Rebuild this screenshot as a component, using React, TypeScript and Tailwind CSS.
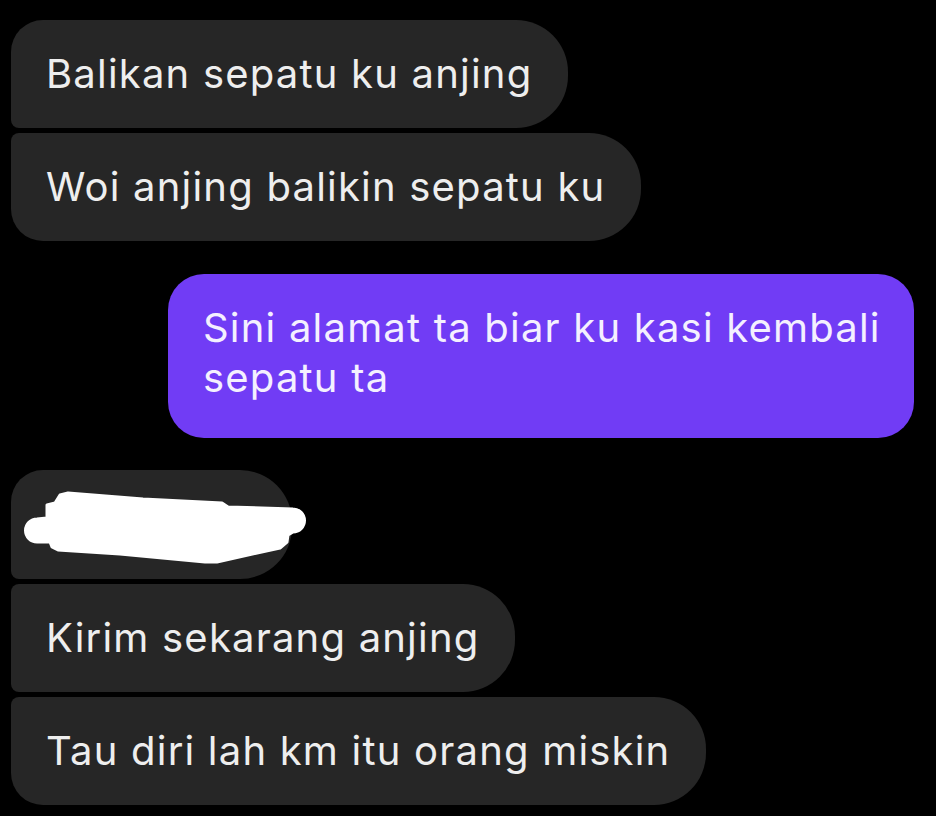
import React from "react";

type Side = "first" | "middle" | "last";

function Bubble({ text, pos }: { text: string; pos: Side }) {
  const corners =
    pos === "first"
      ? "rounded-tl-[32px] rounded-bl-[8px]"
      : pos === "last"
      ? "rounded-tl-[8px] rounded-bl-[32px]"
      : "rounded-tl-[8px] rounded-bl-[8px]";
  return (
    <div
      className={`bg-[#262626] text-[#eeeeee] rounded-r-[52px] ${corners} pl-[35px] pr-[36px] py-[30px] text-[40px] tracking-[1.2px] leading-[48px] whitespace-nowrap`}
    >
      {text}
    </div>
  );
}

// the hidden message: a bubble covered by a hand-drawn white scribble
function Redacted() {
  return (
    <div className="relative bg-[#262626] rounded-tl-[32px] rounded-bl-[8px] rounded-r-[52px] w-[281px] h-[109px]">
      <svg
        className="absolute left-0 top-0 overflow-visible"
        width="310"
        height="110"
        viewBox="0 0 310 110"
      >
        <path
          d="M26 49 L36 48 L36 35 L44 33 L49 25 L57 23 L132 29 L211 33 L217 37 L282 39 A11.5 11.5 0 0 1 282 62 L277 65 L276 72 L269 78 L206 92 L194 92 L109 84 L47 80 L41 77 L39 72 L26 72 A11.5 11.5 0 0 1 26 49 Z"
          fill="#ffffff"
          stroke="#ffffff"
          strokeWidth="3"
          strokeLinejoin="round"
        />
      </svg>
    </div>
  );
}

export default function App() {
  return (
    <div
      className="min-h-screen w-[936px] h-[816px] bg-black pl-[11px] pt-[20px] overflow-hidden"
      style={{ fontFamily: "Inter, Roboto, sans-serif" }}
    >
      <div className="flex flex-col items-start gap-[5px]">
        <Bubble text="Balikan sepatu ku anjing" pos="first" />
        <Bubble text="Woi anjing balikin sepatu ku" pos="last" />
      </div>

      <div className="flex justify-end pr-[22px] mt-[33px]">
        <div className="bg-[#713cf5] text-[#f4f0ff] rounded-[36px] w-[746px] pl-[35px] pr-[20px] pt-[29px] pb-[35px] text-[40px] tracking-[1.2px] leading-[50px]">
          Sini alamat ta biar ku kasi kembali sepatu ta
        </div>
      </div>

      <div className="flex flex-col items-start gap-[5px] mt-[32px]">
        <Redacted />
        <Bubble text="Kirim sekarang anjing" pos="middle" />
        <Bubble text="Tau diri lah km itu orang miskin" pos="last" />
      </div>
    </div>
  );
}
